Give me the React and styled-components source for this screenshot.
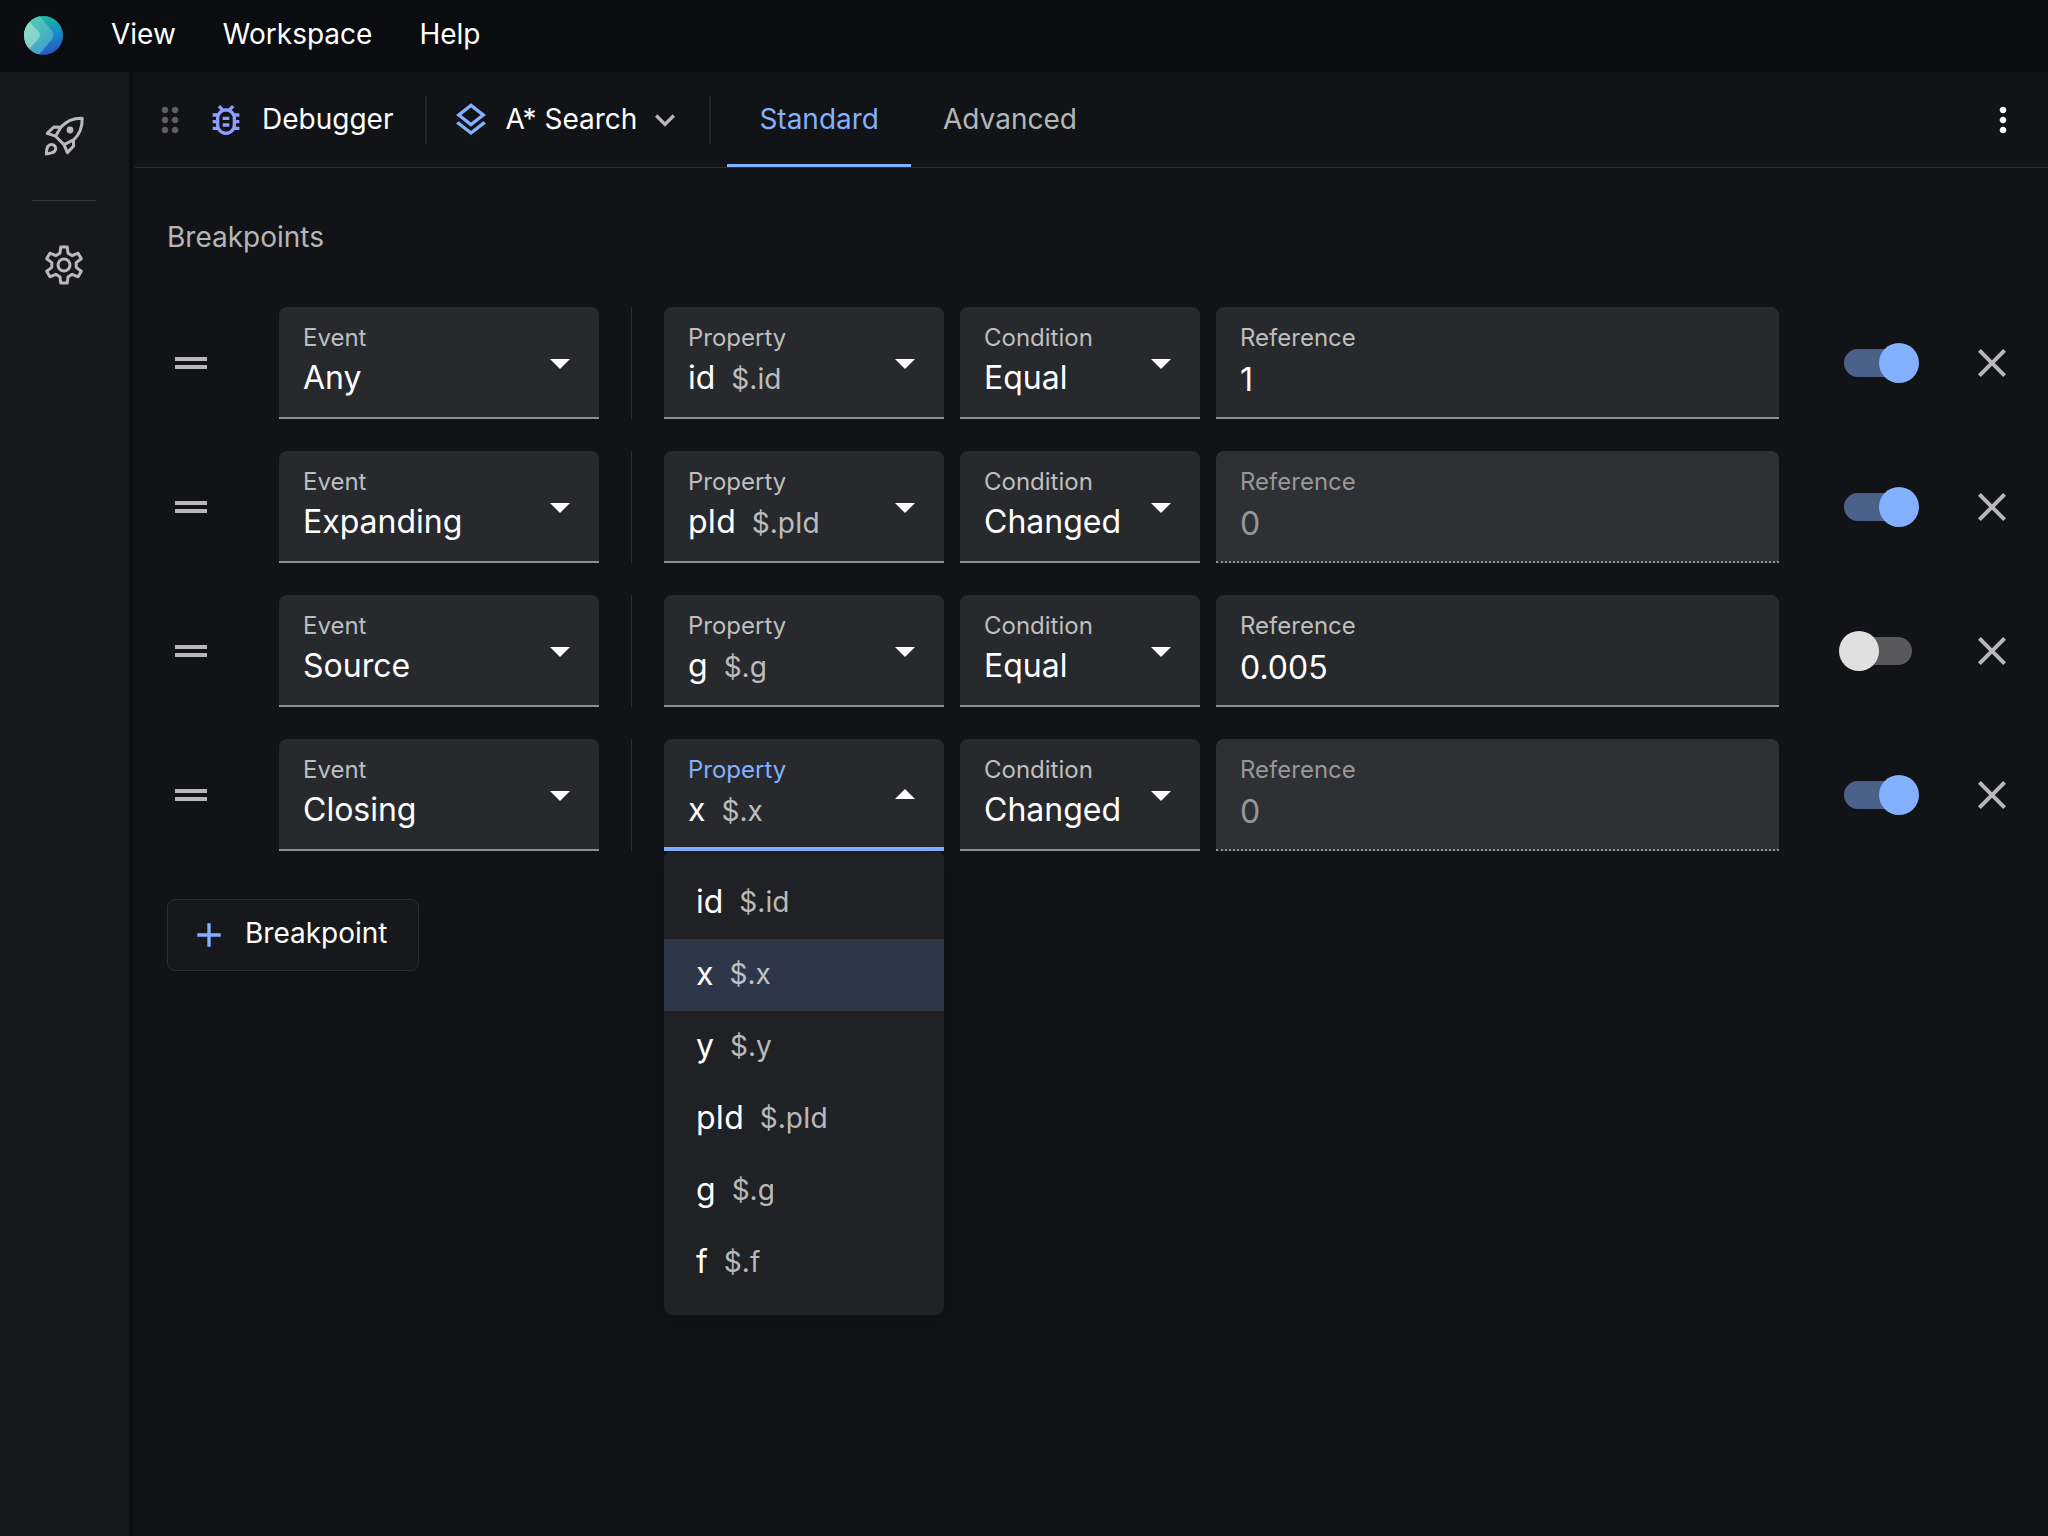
import React, { useState } from "react";
import styled, { createGlobalStyle, css } from "styled-components";
import {
  MdOutlineBugReport,
  MdOutlineLayers,
  MdExpandMore,
  MdMoreVert,
  MdDragIndicator,
  MdDragHandle,
  MdClose,
  MdAdd,
  MdArrowDropDown,
} from "react-icons/md";

const accent = "#82b1ff";
const muted = "rgba(255, 255, 255, 0.7)";
const line = "#2c2d30";

const GlobalStyle = createGlobalStyle`
  *, *::before, *::after { box-sizing: border-box; }
  body {
    margin: 0;
    background: #121316;
    color: #fff;
    font-family: Inter, "Liberation Sans", sans-serif;
    font-size: 28px;
    line-height: 40px;
  }
  button, input, select { font: inherit; color: inherit; }
`;

const Page = styled.div`
  display: flex;
  flex-direction: column;
  min-height: 100vh;
`;

const MenuBar = styled.header`
  display: flex;
  align-items: center;
  gap: 48px;
  height: 72px;
  padding: 0 24px 2px;
  background: #0a0c10;
`;

const MenuNav = styled.nav`
  display: flex;
  gap: 47px;
  padding-bottom: 2px;
`;

const PlainButton = styled.button`
  display: flex;
  align-items: center;
  padding: 0;
  border: 0;
  background: none;
  cursor: pointer;
`;

const Body = styled.div`
  display: flex;
  flex: 1;
`;

const SideBar = styled.aside`
  display: flex;
  flex-direction: column;
  align-items: center;
  gap: 40px;
  width: 130px;
  padding-top: 40px;
  background: #17181c;
  border-right: 2px solid #131417;
`;

const SideButton = styled(PlainButton)`
  color: #bababb;
`;

const SideRule = styled.hr`
  width: 64px;
  height: 1px;
  margin: 0;
  border: 0;
  background: #37383b;
`;

const Panel = styled.main`
  flex: 1;
  min-width: 0;
  padding-left: 2px;
  border-left: 3px solid #0b0c10;
`;

const Toolbar = styled.div`
  display: flex;
  align-items: center;
  height: 96px;
  padding: 0 25px 0 15px;
  border-bottom: 1px solid ${line};
`;

const ToolIcon = styled.span`
  display: flex;
  color: ${(p) => p.$color};
  font-size: 40px;
`;

const ToolGroup = styled.div`
  display: flex;
  align-items: center;
  gap: 16px;
`;

const ToolText = styled.span`
  padding-bottom: 2px;
`;

const PickerButton = styled(PlainButton)`
  gap: 14px;
`;

const PickerLabel = styled(ToolText)`
  margin-right: -6px;
`;

const ToolRule = styled.span`
  width: 2px;
  height: 48px;
  margin: 0 ${(p) => p.$after}px 0 ${(p) => p.$before}px;
  background: #232427;
`;

const Tabs = styled.div`
  display: flex;
  flex: 1;
  align-self: stretch;
`;

const Tab = styled.button`
  padding: 4px 32px 2px;
  border: 0;
  border-bottom: 3px solid ${(p) => (p.$active ? accent : "transparent")};
  background: none;
  color: ${(p) => (p.$active ? accent : muted)};
  cursor: pointer;
`;

const Content = styled.div`
  padding: 48px 32px;
`;

const Heading = styled.h2`
  margin: 0 0 48px;
  color: ${muted};
  font-size: 28px;
  font-weight: 400;
  line-height: 43px;
`;

const Rows = styled.div`
  display: flex;
  flex-direction: column;
  gap: 32px;
`;

const Row = styled.div`
  display: flex;
  align-items: center;
  height: 112px;
`;

const RowHandle = styled(PlainButton)`
  margin-right: 64px;
  color: ${muted};
  font-size: 48px;
  cursor: grab;
`;

const RowRule = styled.span`
  align-self: stretch;
  width: 1px;
  margin: 0 32px;
  background: ${line};
`;

const Fields = styled.div`
  display: flex;
  flex: 1;
  gap: 16px;
  min-width: 0;
`;

const FieldBox = styled.div`
  position: relative;
  display: flex;
  flex-direction: column;
  flex: ${(p) => (p.$width ? `0 0 ${p.$width}px` : "1 1 0")};
  min-width: 0;
  height: 112px;
  padding: 17px 24px 0;
  border-radius: 8px 8px 0 0;
  background: ${(p) => (p.$disabled ? "#2f3033" : "#28292c")};
  &::after {
    content: "";
    position: absolute;
    inset: auto 0 0;
    border-bottom: 2px solid #8f9092;
    ${(p) => p.$disabled && css`border-bottom: 2px dotted #8f9092;`}
    ${(p) => p.$active && css`border-bottom: 4px solid ${accent};`}
  }
`;

const FieldLabel = styled.label`
  color: ${(p) => (p.$active ? accent : p.$disabled ? "#979799" : "#bebebf")};
  font-size: 24px;
  line-height: 28px;
`;

const NativeSelect = styled.select`
  margin: 6px -24px 0;
  padding: 0 72px 0 24px;
  border: 0;
  outline: 0;
  appearance: none;
  background: none;
  font-size: 32px;
  line-height: 40px;
  cursor: pointer;
  option { color: #fff; background: #202124; }
`;

const OverlaySelect = styled.select`
  position: absolute;
  inset: 0;
  width: 100%;
  opacity: 0;
  cursor: pointer;
`;

const TextInput = styled.input`
  width: 100%;
  margin-top: 8px;
  padding: 0;
  border: 0;
  outline: 0;
  background: none;
  font-size: 32px;
  line-height: 40px;
  height: 40px;
  &:disabled { color: #979799; }
`;

const Arrow = styled.span`
  position: absolute;
  top: 32px;
  right: 15px;
  display: flex;
  font-size: 48px;
  pointer-events: none;
  transform: ${(p) => (p.$open ? "rotate(180deg)" : "none")};
`;

const PairText = styled.span`
  display: flex;
  align-items: ${(p) => (p.$centered ? "center" : "baseline")};
  gap: 16px;
  margin-top: ${(p) => (p.$centered ? 0 : 6)}px;
  font-size: 32px;
  line-height: 40px;
`;

const PathText = styled.span`
  color: ${muted};
  font-size: 28px;
`;

const Menu = styled.ul`
  position: absolute;
  z-index: 2;
  top: 100%;
  left: 0;
  right: 0;
  margin: 0;
  padding: 16px 0;
  border-radius: 8px;
  background: #202124;
  box-shadow: 0 8px 24px rgba(0, 0, 0, 0.16);
  list-style: none;
`;

const MenuItem = styled.li`
  display: flex;
  align-items: center;
  height: 72px;
  padding: 0 32px 2px;
  background: ${(p) => (p.$selected ? "#2e3748" : "none")};
  cursor: pointer;
`;

const Switch = styled.input`
  position: relative;
  flex: none;
  width: 80px;
  height: 40px;
  margin: 0 49px 0 60px;
  appearance: none;
  cursor: pointer;
  &::before {
    content: "";
    position: absolute;
    inset: 6px 7px 6px 5px;
    border-radius: 14px;
    background: #59595c;
  }
  &::after {
    content: "";
    position: absolute;
    top: 0;
    left: 0;
    width: 40px;
    height: 40px;
    border-radius: 50%;
    background: #e0e0e0;
  }
  &:checked::before { background: #4a628a; }
  &:checked::after { left: 40px; background: ${accent}; }
`;

const CloseButton = styled(PlainButton)`
  color: ${muted};
  font-size: 48px;
`;

const AddButton = styled.button`
  display: inline-flex;
  align-items: center;
  gap: 16px;
  height: 72px;
  margin-top: 48px;
  padding: 0 30px 0 21px;
  border: 1px solid ${line};
  border-radius: 8px;
  background: #17181c;
  cursor: pointer;
`;

const AddText = styled.span`
  padding-bottom: 4px;
`;

const EVENTS = ["Any", "Source", "Destination", "Expanding", "Generating", "Updating", "Closing"];
const CONDITIONS = ["Equal", "Less than", "Greater than", "Changed"];
const PROPERTIES = ["id", "x", "y", "pId", "g", "f"];

const BREAKPOINTS = [
  { event: "Any", property: "id", condition: "Equal", reference: "1", active: true },
  { event: "Expanding", property: "pId", condition: "Changed", reference: "0", active: true },
  { event: "Source", property: "g", condition: "Equal", reference: "0.005", active: false },
  { event: "Closing", property: "x", condition: "Changed", reference: "0", active: true },
];

function Logo() {
  return (
    <svg width="39" height="39" viewBox="0 0 40 40" aria-hidden="true">
      <defs>
        <linearGradient id="disc" x1="0.4" y1="0" x2="0.7" y2="1">
          <stop offset="0" stopColor="#1bbf9c" />
          <stop offset="0.5" stopColor="#1690c8" />
          <stop offset="1" stopColor="#2c50c4" />
        </linearGradient>
        <linearGradient id="mid" x1="0.1" y1="0" x2="0.7" y2="1">
          <stop offset="0" stopColor="#57d9a8" />
          <stop offset="1" stopColor="#3f9fd0" />
        </linearGradient>
        <linearGradient id="front" x1="0" y1="0" x2="0.3" y2="1">
          <stop offset="0" stopColor="#92e6bf" />
          <stop offset="1" stopColor="#84c8d0" />
        </linearGradient>
        <clipPath id="round">
          <circle cx="20" cy="20" r="20" />
        </clipPath>
      </defs>
      <g clipPath="url(#round)">
        <rect width="40" height="40" fill="url(#disc)" />
        <path d="M-4 -4H12L17 1L28.500 15Q31.500 19.500 28.500 24L15 40H-4Z" fill="url(#mid)" />
        <path d="M-4 0L5 6L14.500 15.500Q18 19.500 14.500 24L4 35L-4 40Z" fill="url(#front)" />
      </g>
    </svg>
  );
}

function RocketIcon() {
  return (
    <svg
      width="48"
      height="48"
      viewBox="0 0 24 24"
      fill="none"
      stroke="currentColor"
      strokeWidth="1.5"
      strokeLinejoin="round"
      aria-hidden="true"
    >
      <path d="M21.100 3.100C17 3 13.400 4.300 10.500 7.500L7.800 12.100L12 16.300L16.800 13.900C20 11 21.200 7.500 21.100 3.100Z" />
      <path d="M10.500 7.600L6.900 7.500L3.600 10.700L7.800 12.100" />
      <path d="M16.700 13.900L16.800 17L13.700 20.300L12 16.300" />
      <path
        d="M3.200 20.900C3.200 18.600 3.900 16.300 5.700 16.300C7.300 16.300 8.200 17.600 7.700 19C7.200 20.500 5.400 20.600 3.200 20.900Z"
        strokeLinejoin="miter"
      />
      <circle cx="15" cy="9" r="1.700" fill="currentColor" stroke="none" />
    </svg>
  );
}

const polar = (radius, degrees) => {
  const a = (degrees * Math.PI) / 180;
  return `${(12 + radius * Math.cos(a)).toFixed(2)} ${(12 + radius * Math.sin(a)).toFixed(2)}`;
};

const GEAR_POINTS = [0, 1, 2, 3, 4, 5]
  .map((i) => i * 60 - 90)
  .flatMap((a) => [polar(6.2, a - 19), polar(9.2, a - 10), polar(9.2, a + 10), polar(6.2, a + 19)])
  .join(" ");

function GearIcon() {
  return (
    <svg
      width="48"
      height="48"
      viewBox="0 0 24 24"
      fill="none"
      stroke="currentColor"
      strokeWidth="1.5"
      strokeLinejoin="round"
      aria-hidden="true"
    >
      <polygon points={GEAR_POINTS} />
      <circle cx="12" cy="12" r="3" />
    </svg>
  );
}

function Pair({ name, centered }) {
  return (
    <PairText $centered={centered}>
      {name}
      <PathText>{`$.${name}`}</PathText>
    </PairText>
  );
}

function SelectField({ id, label, width, options, value, onChange }) {
  return (
    <FieldBox $width={width}>
      <FieldLabel htmlFor={id}>{label}</FieldLabel>
      <NativeSelect id={id} value={value} onChange={(e) => onChange(e.target.value)}>
        {options.map((o) => (
          <option key={o}>{o}</option>
        ))}
      </NativeSelect>
      <Arrow>
        <MdArrowDropDown />
      </Arrow>
    </FieldBox>
  );
}

function PropertyField({ id, value, open, onChange }) {
  return (
    <FieldBox $width={280} $active={open}>
      <FieldLabel htmlFor={id} $active={open}>
        Property
      </FieldLabel>
      <Pair name={value} />
      <OverlaySelect id={id} value={value} onChange={(e) => onChange(e.target.value)}>
        {PROPERTIES.map((o) => (
          <option key={o}>{o}</option>
        ))}
      </OverlaySelect>
      <Arrow $open={open}>
        <MdArrowDropDown />
      </Arrow>
      {open && (
        <Menu role="listbox" aria-label="Property">
          {PROPERTIES.map((o) => (
            <MenuItem
              key={o}
              role="option"
              aria-selected={o === value}
              $selected={o === value}
              onClick={() => onChange(o)}
            >
              <Pair name={o} centered />
            </MenuItem>
          ))}
        </Menu>
      )}
    </FieldBox>
  );
}

function BreakpointRow({ index, item, open, onChange, onRemove }) {
  const disabled = item.condition === "Changed";
  const set = (key) => (v) => onChange({ ...item, [key]: v });
  return (
    <Row>
      <RowHandle type="button" aria-label="Reorder breakpoint">
        <MdDragHandle />
      </RowHandle>
      <SelectField
        id={`event-${index}`}
        label="Event"
        width={320}
        options={EVENTS}
        value={item.event}
        onChange={set("event")}
      />
      <RowRule />
      <Fields>
        <PropertyField
          id={`property-${index}`}
          value={item.property}
          open={open}
          onChange={set("property")}
        />
        <SelectField
          id={`condition-${index}`}
          label="Condition"
          width={240}
          options={CONDITIONS}
          value={item.condition}
          onChange={set("condition")}
        />
        <FieldBox $disabled={disabled}>
          <FieldLabel htmlFor={`reference-${index}`} $disabled={disabled}>
            Reference
          </FieldLabel>
          <TextInput
            id={`reference-${index}`}
            type="text"
            value={item.reference}
            disabled={disabled}
            onChange={(e) => set("reference")(e.target.value)}
          />
        </FieldBox>
      </Fields>
      <Switch
        type="checkbox"
        aria-label="Enable breakpoint"
        checked={item.active}
        onChange={(e) => set("active")(e.target.checked)}
      />
      <CloseButton type="button" aria-label="Remove breakpoint" onClick={onRemove}>
        <MdClose />
      </CloseButton>
    </Row>
  );
}

export default function App() {
  const [items, setItems] = useState(BREAKPOINTS);
  return (
    <>
      <GlobalStyle />
      <Page>
        <MenuBar>
          <Logo />
          <MenuNav>
            <PlainButton type="button">View</PlainButton>
            <PlainButton type="button">Workspace</PlainButton>
            <PlainButton type="button">Help</PlainButton>
          </MenuNav>
        </MenuBar>
        <Body>
          <SideBar>
            <SideButton type="button" aria-label="Explore">
              <RocketIcon />
            </SideButton>
            <SideRule />
            <SideButton type="button" aria-label="Settings">
              <GearIcon />
            </SideButton>
          </SideBar>
          <Panel>
            <Toolbar>
              <ToolGroup>
                <ToolIcon $color="#606063">
                  <MdDragIndicator />
                </ToolIcon>
                <ToolIcon $color="#8c9eff">
                  <MdOutlineBugReport />
                </ToolIcon>
                <ToolText>Debugger</ToolText>
              </ToolGroup>
              <ToolRule $before={32} $after={24} />
              <PickerButton type="button">
                <ToolIcon $color={accent}>
                  <MdOutlineLayers />
                </ToolIcon>
                <PickerLabel>A* Search</PickerLabel>
                <ToolIcon $color="#b8b8b9">
                  <MdExpandMore />
                </ToolIcon>
              </PickerButton>
              <ToolRule $before={24} $after={16} />
              <Tabs role="tablist">
                <Tab type="button" role="tab" aria-selected="true" $active>
                  Standard
                </Tab>
                <Tab type="button" role="tab" aria-selected="false">
                  Advanced
                </Tab>
              </Tabs>
              <PlainButton type="button" aria-label="More options">
                <ToolIcon $color="#fff">
                  <MdMoreVert />
                </ToolIcon>
              </PlainButton>
            </Toolbar>
            <Content>
              <Heading>Breakpoints</Heading>
              <Rows>
                {items.map((item, i) => (
                  <BreakpointRow
                    key={i}
                    index={i}
                    item={item}
                    open={i === 3}
                    onChange={(next) => setItems(items.map((it, j) => (j === i ? next : it)))}
                    onRemove={() => setItems(items.filter((_, j) => j !== i))}
                  />
                ))}
              </Rows>
              <AddButton
                type="button"
                onClick={() => setItems([...items, { ...BREAKPOINTS[0] }])}
              >
                <ToolIcon $color={accent}>
                  <MdAdd />
                </ToolIcon>
                <AddText>Breakpoint</AddText>
              </AddButton>
            </Content>
          </Panel>
        </Body>
      </Page>
    </>
  );
}
